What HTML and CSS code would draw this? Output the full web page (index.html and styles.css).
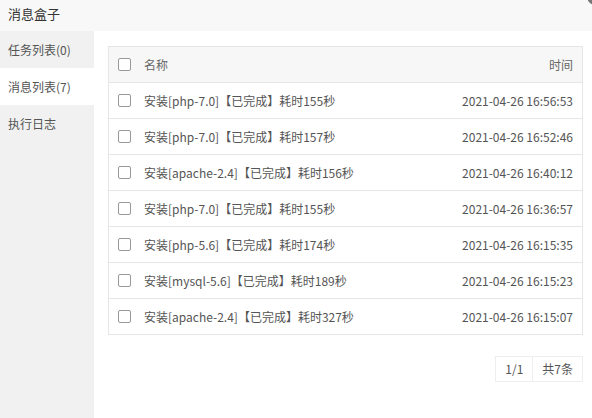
FILE: index.html
```html
<!DOCTYPE html>
<html lang="zh-CN">
<head>
    <meta charset="UTF-8">
    <meta name="viewport" content="width=device-width, initial-scale=1.0">
    <title>消息盒子</title>
    <link rel="stylesheet" href="styles.css">
</head>
<body>
<div class="layer">
    <div class="layer-title">消息盒子</div>
    <span class="layer-close"></span>
    <div class="layer-body">
        <ul class="side-tabs">
            <li>任务列表(0)</li>
            <li class="active">消息列表(7)</li>
            <li>执行日志</li>
        </ul>
        <div class="content">
            <table class="msg-table">
                <thead>
                    <tr>
                        <th class="col-check"><span class="checkbox"></span></th>
                        <th class="col-name">名称</th>
                        <th class="col-time">时间</th>
                    </tr>
                </thead>
                <tbody>
                    <tr><td class="col-check"><span class="checkbox"></span></td><td class="col-name">安装[php-7.0]【已完成】耗时155秒</td><td class="col-time">2021-04-26 16:56:53</td></tr>
                    <tr><td class="col-check"><span class="checkbox"></span></td><td class="col-name">安装[php-7.0]【已完成】耗时157秒</td><td class="col-time">2021-04-26 16:52:46</td></tr>
                    <tr><td class="col-check"><span class="checkbox"></span></td><td class="col-name">安装[apache-2.4]【已完成】耗时156秒</td><td class="col-time">2021-04-26 16:40:12</td></tr>
                    <tr><td class="col-check"><span class="checkbox"></span></td><td class="col-name">安装[php-7.0]【已完成】耗时155秒</td><td class="col-time">2021-04-26 16:36:57</td></tr>
                    <tr><td class="col-check"><span class="checkbox"></span></td><td class="col-name">安装[php-5.6]【已完成】耗时174秒</td><td class="col-time">2021-04-26 16:15:35</td></tr>
                    <tr><td class="col-check"><span class="checkbox"></span></td><td class="col-name">安装[mysql-5.6]【已完成】耗时189秒</td><td class="col-time">2021-04-26 16:15:23</td></tr>
                    <tr><td class="col-check"><span class="checkbox"></span></td><td class="col-name">安装[apache-2.4]【已完成】耗时327秒</td><td class="col-time">2021-04-26 16:15:07</td></tr>
                </tbody>
            </table>
            <div class="pager">
                <span class="pager-item">1/1</span>
                <span class="pager-item">共7条</span>
            </div>
        </div>
    </div>
</div>
</body>
</html>
```

FILE: styles.css
```css
html, body {
    margin: 0;
    padding: 0;
    height: 100%;
}
body {
    font-family: "Noto Sans CJK SC", "Noto Sans", sans-serif;
    font-size: 12px;
    color: #555;
    background-color: #fff;
    overflow: hidden;
}
.layer {
    position: relative;
    display: flex;
    flex-direction: column;
    height: 418px;
}
.layer-title {
    height: 31px;
    line-height: 28px;
    padding-left: 8px;
    font-size: 13px;
    color: #333;
    background-color: #f8f8f8;
}
.layer-close {
    position: absolute;
    top: -12px;
    right: -12px;
    width: 17px;
    height: 17px;
    border-radius: 50%;
    background-color: #777;
}
.layer-body {
    flex: 1;
    display: flex;
}
.side-tabs {
    list-style: none;
    margin: 0;
    padding: 0;
    width: 94px;
    background-color: #f0f1f0;
}
.side-tabs li {
    height: 37px;
    line-height: 37px;
    padding-left: 8px;
    color: #555;
}
.side-tabs li.active {
    background-color: #fff;
}
.content {
    flex: 1;
    padding: 15px 9px 0 14px;
}
.msg-table {
    width: 100%;
    border-collapse: collapse;
    border: 1px solid #e6e6e6;
}
.msg-table th,
.msg-table td {
    height: 35px;
    padding: 0 9px 0 0;
    border-bottom: 1px solid #e6e6e6;
    text-align: left;
    font-weight: normal;
    color: #555;
    white-space: nowrap;
}
.msg-table thead tr {
    background-color: #f7f7f7;
}
.msg-table th {
    color: #666;
}
.msg-table .col-check {
    padding: 0 13px 0 9px;
}
.msg-table .col-name {
    width: 100%;
}
.msg-table .col-time {
    text-align: right;
}
.checkbox {
    display: block;
    width: 11px;
    height: 11px;
    border: 1px solid #999;
    border-radius: 2px;
    background-color: #fff;
}
.pager {
    display: flex;
    justify-content: flex-end;
    margin-top: 21px;
}
.pager-item {
    height: 24px;
    line-height: 24px;
    padding: 0 9px;
    border: 1px solid #eee;
    color: #555;
}
.pager-item + .pager-item {
    border-left: none;
}
```
